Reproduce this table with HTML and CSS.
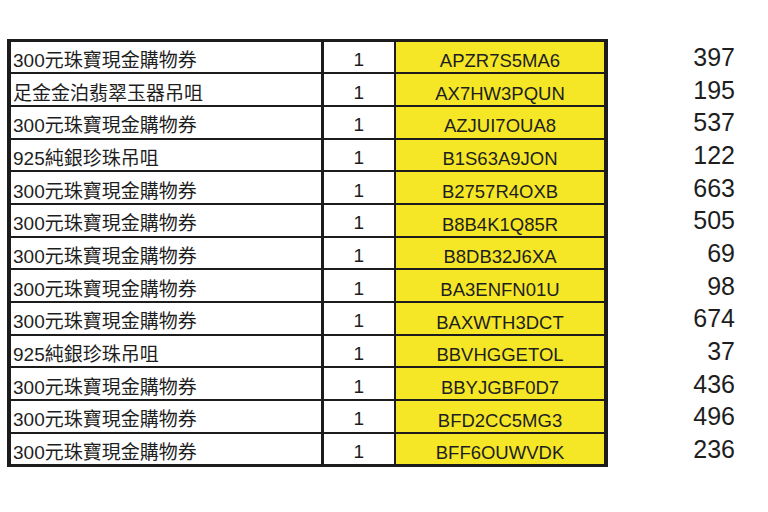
FILE: index.html
```html
<!DOCTYPE html>
<html lang="zh-Hant">
<head>
<meta charset="utf-8">
<title>購物券清單</title>
<link rel="stylesheet" href="styles.css">
</head>
<body>
<div class="page">
<table class="sheet">
<colgroup><col class="c-name"><col class="c-qty"><col class="c-code"></colgroup>
<tbody>
<tr><td class="name">300元珠寶現金購物券</td><td class="qty">1</td><td class="code">APZR7S5MA6</td></tr>
<tr><td class="name">足金金泊翡翠玉器吊咀</td><td class="qty">1</td><td class="code">AX7HW3PQUN</td></tr>
<tr><td class="name">300元珠寶現金購物券</td><td class="qty">1</td><td class="code">AZJUI7OUA8</td></tr>
<tr><td class="name">925純銀珍珠吊咀</td><td class="qty">1</td><td class="code">B1S63A9JON</td></tr>
<tr><td class="name">300元珠寶現金購物券</td><td class="qty">1</td><td class="code">B2757R4OXB</td></tr>
<tr><td class="name">300元珠寶現金購物券</td><td class="qty">1</td><td class="code">B8B4K1Q85R</td></tr>
<tr><td class="name">300元珠寶現金購物券</td><td class="qty">1</td><td class="code">B8DB32J6XA</td></tr>
<tr><td class="name">300元珠寶現金購物券</td><td class="qty">1</td><td class="code">BA3ENFN01U</td></tr>
<tr><td class="name">300元珠寶現金購物券</td><td class="qty">1</td><td class="code">BAXWTH3DCT</td></tr>
<tr><td class="name">925純銀珍珠吊咀</td><td class="qty">1</td><td class="code">BBVHGGETOL</td></tr>
<tr><td class="name">300元珠寶現金購物券</td><td class="qty">1</td><td class="code">BBYJGBF0D7</td></tr>
<tr><td class="name">300元珠寶現金購物券</td><td class="qty">1</td><td class="code">BFD2CC5MG3</td></tr>
<tr><td class="name">300元珠寶現金購物券</td><td class="qty">1</td><td class="code">BFF6OUWVDK</td></tr>
</tbody>
</table>
<ul class="nums">
<li>397</li><li>195</li><li>537</li><li>122</li><li>663</li><li>505</li><li>69</li><li>98</li><li>674</li><li>37</li><li>436</li><li>496</li><li>236</li>
</ul>
</div>
</body>
</html>
```
FILE: styles.css
```css
html, body {
  margin: 0;
  padding: 0;
  background: #ffffff;
}
body {
  font-family: "Liberation Sans", "Noto Sans CJK TC", Arial, sans-serif;
  color: #1e1e1e;
}
.page {
  display: flex;
  align-items: flex-start;
  padding: 39px 0 0 7px;
}
.sheet {
  border-collapse: collapse;
  table-layout: fixed;
  width: 597px;
  flex: none;
}
.c-name { width: 313px; }
.c-qty { width: 73px; }
.c-code { width: 211px; }

.sheet td {
  height: 32.7px;
  box-sizing: border-box;
  white-space: nowrap;
  overflow: hidden;
  line-height: 1;
  vertical-align: middle;
  border-top: 2px solid #1c1c1c;
  border-bottom: 2px solid #1c1c1c;
  padding: 5px 0 0 0;
}
.sheet tr:first-child td { border-top-width: 3px; }
.sheet tr:last-child td { border-bottom-width: 3px; }

.sheet td.name {
  border-left: 4px solid #1c1c1c;
  border-right: 3px solid #1c1c1c;
  font-size: 19px;
  padding-left: 2px;
  padding-top: 7px;
  text-align: left;
}
.sheet td.qty {
  border-right: 2px solid #1c1c1c;
  font-size: 19px;
  text-align: center;
}
.sheet td.code {
  background: #f5e726;
  border-right: 4px solid #1c1c1c;
  font-size: 18.5px;
  text-align: center;
  padding-top: 9px;
}

.nums {
  list-style: none;
  margin: 0;
  padding: 1px 0 0 0;
  width: 127px;
  flex: none;
}
.nums li {
  height: 32.7px;
  display: flex;
  align-items: center;
  justify-content: flex-end;
  padding-top: 2px;
  box-sizing: border-box;
  font-size: 25px;
  line-height: 1;
}
```
